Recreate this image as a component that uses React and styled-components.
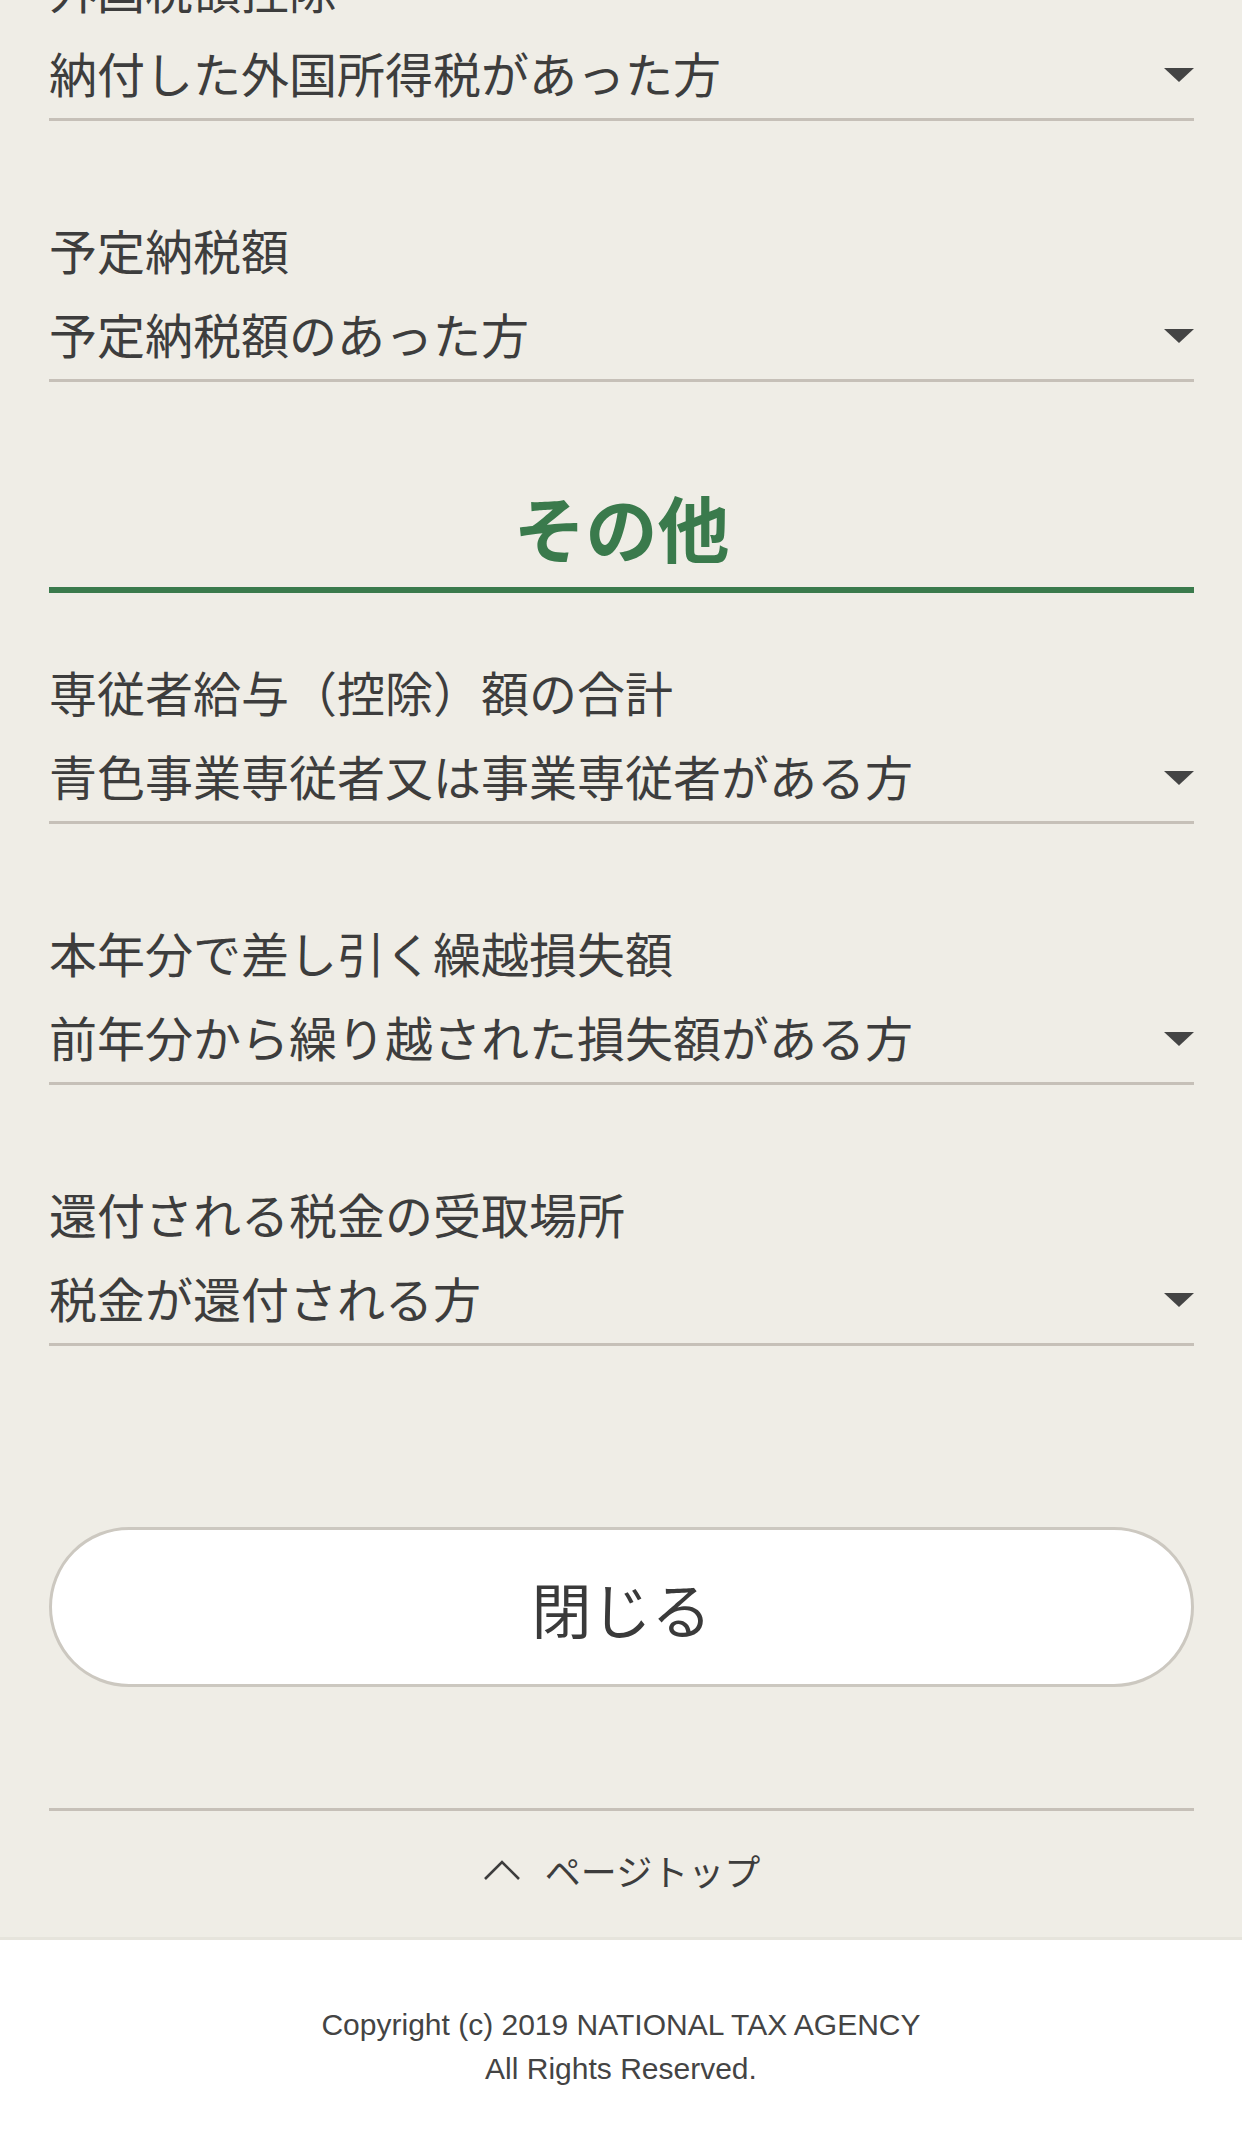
import React from 'react'
import styled, { createGlobalStyle } from 'styled-components'

const GlobalStyle = createGlobalStyle`
  body {
    margin: 0;
    background: #ffffff;
    font-family: "Noto Sans CJK JP", "Noto Sans", sans-serif;
    color: #3d3d3d;
  }
`

const Main = styled.main`
  display: flow-root;
  background: #efede6;
  padding: 0 48px 0 49px;
  border-bottom: 3px solid #e6e4dc;
`

const Field = styled.div`
  margin-top: ${props => props.offset || 0}px;
  padding: ${props => props.top || 98}px 0 16px;
  border-bottom: 3px solid #c6c0b8;
`

const Label = styled.div`
  font-size: 48px;
  line-height: 60px;
  height: 60px;
  white-space: nowrap;
`

const ValueRow = styled.div`
  margin-top: 24px;
  height: 60px;
  display: flex;
  align-items: center;
  justify-content: space-between;
`

const Value = styled.span`
  font-size: 48px;
  line-height: 60px;
  white-space: nowrap;
`

const Caret = styled.span`
  width: 0;
  height: 0;
  margin-top: 6px;
  border-left: 15px solid transparent;
  border-right: 15px solid transparent;
  border-top: 14px solid #444444;
`

const Heading = styled.h2`
  margin: 94px 0 0;
  padding-bottom: 11px;
  font-size: 72px;
  line-height: 100px;
  font-weight: 700;
  text-align: center;
  color: #3a7a4c;
  border-bottom: 6px solid #3a7a4c;
`

const CloseButton = styled.button`
  display: block;
  width: 100%;
  height: 160px;
  margin-top: 181px;
  box-sizing: border-box;
  background: #ffffff;
  border: 3px solid #ccc8c0;
  border-radius: 80px;
  font-family: "Noto Sans CJK JP", sans-serif;
  font-size: 60px;
  color: #3a3a3a;
  cursor: pointer;
`

const PageTop = styled.div`
  margin-top: 121px;
  border-top: 3px solid #c6c0b8;
  padding: 34px 0 42px;
  display: flex;
  justify-content: center;
`

const PageTopLink = styled.a`
  display: flex;
  align-items: center;
  gap: 24px;
  height: 50px;
  font-size: 36px;
  line-height: 50px;
  color: #3d3d3d;
  text-decoration: none;
`

const Footer = styled.footer`
  padding: 63px 0 60px;
  text-align: center;
  font-family: "Liberation Sans", Arial, sans-serif;
  font-size: 30px;
  line-height: 44px;
  color: #444444;
`

const fields1 = [
  { label: '外国税額控除', value: '納付した外国所得税があった方' },
  { label: '予定納税額', value: '予定納税額のあった方' },
]

const fields2 = [
  { label: '専従者給与（控除）額の合計', value: '青色事業専従者又は事業専従者がある方' },
  { label: '本年分で差し引く繰越損失額', value: '前年分から繰り越された損失額がある方' },
  { label: '還付される税金の受取場所', value: '税金が還付される方' },
]

const SelectField = ({ label, value, offset, top }) => (
  <Field offset={offset} top={top}>
    <Label>{label}</Label>
    <ValueRow>
      <Value>{value}</Value>
      <Caret />
    </ValueRow>
  </Field>
)

export default function App() {
  return (
    <>
      <GlobalStyle />
      <Main>
        {fields1.map((f, i) => (
          <SelectField key={f.label} {...f} offset={i === 0 ? -140 : 0} />
        ))}
        <Heading>その他</Heading>
        {fields2.map((f, i) => (
          <SelectField key={f.label} {...f} top={i === 0 ? 68 : 98} />
        ))}
        <CloseButton>閉じる</CloseButton>
        <PageTop>
          <PageTopLink href="#top">
            <svg width="38" height="22" viewBox="0 0 38 22" fill="none">
              <polyline points="2,20 19,3 36,20" stroke="#3d3d3d" strokeWidth="2.6" />
            </svg>
            ページトップ
          </PageTopLink>
        </PageTop>
      </Main>
      <Footer>
        Copyright (c) 2019 NATIONAL TAX AGENCY<br />
        All Rights Reserved.
      </Footer>
    </>
  )
}
